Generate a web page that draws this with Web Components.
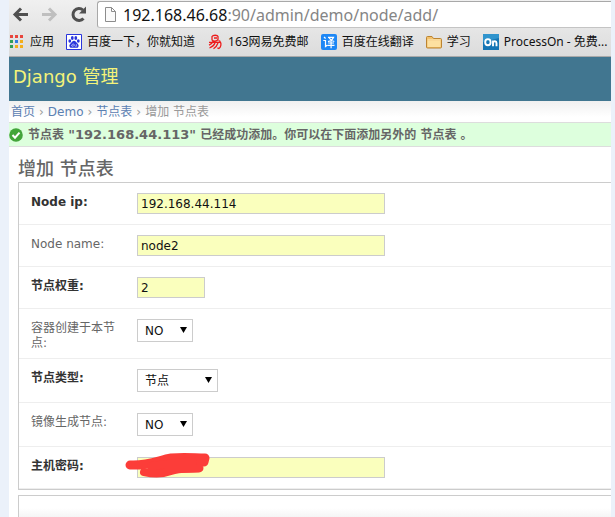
<!DOCTYPE html>
<html lang="zh-CN">
<head>
<meta charset="utf-8">
<title>增加 节点表 | Django 管理</title>
<style>
html, body { margin: 0; height: 100%; }
body { background: #ebf1fa; font-family: "DejaVu Sans", "Noto Sans CJK SC", sans-serif; font-size: 12px; color: #333; }
.ip { font-size: 13px; }
</style>
</head>
<body>
<browser-window>
  <browser-toolbar slot="chrome" host="192.168.46.68" path=":90/admin/demo/node/add/"></browser-toolbar>
  <bookmark-bar slot="chrome">
    <bookmark-link icon="apps">应用</bookmark-link>
    <bookmark-link icon="paw">百度一下，你就知道</bookmark-link>
    <bookmark-link icon="netease">163网易免费邮</bookmark-link>
    <bookmark-link icon="translate">百度在线翻译</bookmark-link>
    <bookmark-link icon="folder">学习</bookmark-link>
    <bookmark-link icon="on">ProcessOn - 免费...</bookmark-link>
  </bookmark-bar>
  <admin-header>Django 管理</admin-header>
  <admin-breadcrumbs></admin-breadcrumbs>
  <admin-message>节点表 <span class="ip">"192.168.44.113"</span> 已经成功添加。你可以在下面添加另外的 节点表 。</admin-message>
  <admin-form heading="增加 节点表">
    <form-row label="Node ip:" value="192.168.44.114" required></form-row>
    <form-row label="Node name:" value="node2"></form-row>
    <form-row label="节点权重:" value="2" size="short" required></form-row>
    <form-row label="容器创建于本节点:" kind="select" value="NO"></form-row>
    <form-row label="节点类型:" kind="select" value="节点" size="wide" required></form-row>
    <form-row label="镜像生成节点:" kind="select" value="NO"></form-row>
    <form-row label="主机密码:" kind="password" required></form-row>
  </admin-form>
</browser-window>

<script>
const define = (name, markup) => customElements.define(name, class extends HTMLElement {
  constructor() {
    super();
    this.attachShadow({ mode: 'open' });
  }
  connectedCallback() {
    this.shadowRoot.innerHTML = typeof markup === 'function' ? markup(this) : markup;
  }
});

const icons = {
  apps: `<svg viewBox="0 0 16 16"><g fill="#e8453c"><path d="M1 1h3v3H1zM6 1h3v3H6zM11 1h3v3h-3z"/></g><path fill="#2f9e58" d="M1 6h3v3H1z"/><path fill="#2f7de0" d="M6 6h3v3H6z"/><path fill="#f4ae1a" d="M11 6h3v3h-3zM6 11h3v3H6zM11 11h3v3h-3z"/><path fill="#2f9e58" d="M1 11h3v3H1z"/></svg>`,
  paw: `<svg viewBox="0 0 16 16"><path fill="#fff" stroke="#2a35dc" d="M.5.5h15v15H.5z"/><g fill="#2a35dc"><ellipse cx="3.8" cy="7" rx="1.4" ry="1.8"/><ellipse cx="6.3" cy="4" rx="1.4" ry="1.9"/><ellipse cx="9.8" cy="4" rx="1.4" ry="1.9"/><ellipse cx="12.3" cy="7" rx="1.4" ry="1.8"/><path d="M8 6.8c1.4 0 2 1.2 3 2.3 1.5 1.5 2.1 2.4 1.3 3.8-.8 1.3-2.5.9-4.3.8-1.8.1-3.5.5-4.3-.8-.8-1.4-.2-2.3 1.3-3.8 1-1.100 1.600-2.300 3-2.300z"/></g><path fill="none" stroke="#fff" stroke-width=".5" d="M7.200 9.300v3H6.200c-.9 0-.9-1.600 0-1.600h1M8.700 10.200v1.500c0 .6.500.6 1.800.6v-2.100"/></svg>`,
  netease: `<svg viewBox="0 0 16 16" fill="none" stroke="#ed1c1c" stroke-width="1.300"><path d="M5 2.500C6 .8 10.500.8 11 2.500v3C10 7.500 6 7.500 5 5.800zM7 4h3M2 8.300h11.500c1 2 .3 5-1.600 6.200l-1.500-.7M6 7.500c-.8 2-2.500 3-4 3.600M8 9c-1 2.500-3 4-5.500 5M11 9c-1 3-2.500 4.500-4.500 5.700M11.500 6.500l2 1"/></svg>`,
  translate: `<svg viewBox="0 0 16 16"><rect width="16" height="16" rx="2" fill="#1d87f5"/><path fill="none" stroke="#fff" stroke-width="1.200" d="M3 3l1.600 1.500M2.300 6.500h2.200v6l1.700-1.300M7 3.400h5.500c-1 2.200-3 3.600-5.500 4.200M8 3.800c1.200 2 3 3.200 5.300 3.700M7.200 9h5.800M6.500 11.300h7M10.100 7.300v7"/></svg>`,
  folder: `<svg viewBox="0 0 16 16"><path fill="#f3c16b" stroke="#bb8432" d="M.5 13V3.500q0-1 1-1H6l1.500 2h7q1 0 1 1V13q0 1-1 1h-13q-1 0-1-1z"/><path fill="#fde0a0" d="M1.500 7h13v6h-13z"/><path stroke="#fff0c8" d="M1.500 6h13"/></svg>`,
  on: `<svg viewBox="0 0 16 16"><path fill="#1676b5" d="M0 0h16v16H0z"/><path fill="#3094cd" d="M0 0h16v4L0 8z"/><ellipse cx="4.900" cy="8.200" rx="2.700" ry="3.100" fill="none" stroke="#fff" stroke-width="1.900"/><path fill="none" stroke="#fff" stroke-width="1.900" d="M10 12.200V6.500M10 8.500c.5-1.700 3.500-1.700 3.500.4v3.300"/></svg>`
};

define('browser-window', `
  <style>
    :host { display: flex; flex-direction: column; min-height: 100vh; margin: 0 4px 0 9px; background: #fff; overflow: hidden; }
    .chrome { background: linear-gradient(#f0f0f0, #dcdcdc); border-bottom: 1px solid #a9a9a9; }
  </style>
  <div class="chrome"><slot name="chrome"></slot></div>
  <slot></slot>`);

define('browser-toolbar', el => `
  <style>
    :host { display: flex; align-items: center; height: 28px; }
    button { border: 0; padding: 0; background: none; width: 29px; height: 28px; flex: none; }
    svg { display: block; }
    .bar { flex: 1; min-width: 0; display: flex; align-items: center; gap: 6px; height: 27px; box-sizing: border-box; margin: 1px 0 0 1px; padding-left: 6px; background: #fff; border: 1px solid #a8a8a8; border-bottom-color: #c4c4c4; border-right: 0; border-radius: 3px 0 0 3px; font: 16px/24px "Noto Sans", "Open Sans", sans-serif; white-space: nowrap; color: #858585; }
    b { font-weight: 400; color: #111; }
  </style>
  <button aria-label="Back"><svg width="22" height="28" viewBox="0 0 22 28" fill="none" stroke="#505050" stroke-width="3"><path d="M19 14.500H6M12 8.500l-6 6 6 6"/></svg></button>
  <button aria-label="Forward"><svg width="22" height="28" viewBox="0 0 22 28" fill="none" stroke="#bfbfbf" stroke-width="3"><path d="M4 14.500h13M11 8.500l6 6-6 6"/></svg></button>
  <button aria-label="Reload"><svg width="24" height="28" viewBox="0 0 24 28"><path fill="none" stroke="#505050" stroke-width="3" d="M16.500 18.500a6 6 0 1 1-.5-8.500"/><path fill="#505050" d="M19 6.500v7h-7z"/></svg></button>
  <div class="bar"><svg width="13" height="17" viewBox="0 0 13 17" fill="#fafafa" stroke="#8c8c8c"><path d="M1.500 1.500h6l4 4v10h-10zM7.500 1.500v4h4"/></svg><span><b>${el.getAttribute('host')}</b>${el.getAttribute('path')}</span></div>`);

define('bookmark-bar', `
  <style>
    :host { display: flex; align-items: center; height: 28px; gap: 12px; color: #111; overflow: hidden; }
  </style>
  <slot></slot>`);

define('bookmark-link', el => `
  <style>
    :host { flex: none; }
    a { display: flex; align-items: center; gap: 5px; color: inherit; text-decoration: none; white-space: nowrap; font: 12px/18px "Noto Sans", "Noto Sans CJK SC", sans-serif; }
    svg { display: block; width: 16px; height: 16px; }
  </style>
  <a href="#">${icons[el.getAttribute('icon')]}<span><slot></slot></span></a>`);

define('admin-header', `
  <style>
    :host { display: block; background: #417690; color: #f4f379; padding: 8px 4px 12px; font-size: 18px; line-height: 24px; }
    h1 { font: inherit; margin: 0; }
  </style>
  <h1><slot></slot></h1>`);

define('admin-breadcrumbs', `
  <style>
    :host { display: flex; gap: 4px; padding: 2px 2px 1px; line-height: 18px; color: #999; background: linear-gradient(#f0f0f0, #fff 16px); border-bottom: 1px solid #ddd; white-space: nowrap; }
    a { color: #5b80b2; text-decoration: none; }
  </style>
  <a href="#">首页</a><span>›</span><a href="#">Demo</a><span>›</span><a href="#">节点表</a><span>›</span><span>增加 节点表</span>`);

define('admin-message', `
  <style>
    :host { display: flex; align-items: center; gap: 5px; padding: 3px 0 2px; line-height: 18px; font-weight: 700; color: #666; background: #dfd; border-bottom: 1px solid #ddd; white-space: nowrap; }
    svg { display: block; flex: none; }
  </style>
  <svg width="14" height="14" viewBox="0 0 14 14"><circle cx="7" cy="7" r="6.800" fill="#43a53a"/><path fill="none" stroke="#fff" stroke-width="2" d="M3.500 7l2.500 2.700 4.500-5"/></svg>
  <span><slot></slot></span>`);

define('admin-form', el => `
  <style>
    :host { display: flex; flex-direction: column; flex: 1; padding: 10px 0 0 9px; }
    h2 { margin: 0 0 1px; font-size: 18px; line-height: 24px; font-weight: 500; color: #666; }
    form { display: flex; flex-direction: column; flex: 1; gap: 5px; }
    fieldset { display: block; margin: 0; padding: 0; min-width: 0; border: 1px solid #ccc; border-right: 0; }
    .next { flex: 1; border-bottom: 0; background: linear-gradient(#fff 12px, #f4f4f4 22px); }
  </style>
  <h2>${el.getAttribute('heading')}</h2>
  <form><fieldset><slot></slot></fieldset><fieldset class="next"></fieldset></form>`);

define('form-row', el => {
  const kind = el.getAttribute('kind') || 'text';
  const value = el.getAttribute('value') || '';
  const control = kind === 'select'
    ? `<select id="field"><option>${value}</option></select>`
    : `<input id="field" type="${kind}" value="${value}">`;
  const scribble = kind === 'password'
    ? `<svg class="scribble" width="86" height="26" viewBox="0 0 86 26" fill="none" stroke="#fc3d39" stroke-linecap="round" stroke-linejoin="round"><path stroke-width="9" d="M5 13C24 14 34 8 46 6 60 5 70 6 80 6L79 10C60 10 48 14 28 17L74 16"/><path stroke-width="8" d="M26 14L68 9M19 20C28 22 38 22 46 19 54 16 64 17 74 16"/></svg>` : '';
  return `
  <style>
    :host { display: grid; grid-template-columns: 96px 1fr; column-gap: 10px; padding: 12px 12px 7px; border-bottom: 1px solid #eee; line-height: 15px; color: #666; }
    :host([required]) label { font-weight: 700; color: #333; }
    label { word-break: break-all; padding-right: 10px; }
    .control { position: relative; display: flex; width: 248px; height: 21px; margin: -2px 0 3px; }
    :host([size="short"]) .control { width: 68px; }
    :host([kind="select"]) .control { width: 56px; height: 23px; }
    :host([size="wide"]) .control { width: 81px; }
    :host([kind="select"]) .control::after { content: ""; position: absolute; right: 6px; top: 8px; width: 7px; height: 6px; background: #000; clip-path: polygon(0 0, 100% 0, 50% 100%); pointer-events: none; }
    input, select { box-sizing: border-box; width: 100%; height: 100%; margin: 0; border: 1px solid #ccc; border-radius: 0; font: 12px/15px "DejaVu Sans", "Noto Sans CJK SC", sans-serif; color: #111; }
    input { padding: 0 3px; background: #faffbd; }
    select { appearance: none; padding: 1px 7px 0; background: #fff; }
    .scribble { position: absolute; left: -12px; top: -5px; }
  </style>
  <label for="field">${el.getAttribute('label')}</label>
  <div class="control">${control}${scribble}</div>`;
});
</script>
</body>
</html>
